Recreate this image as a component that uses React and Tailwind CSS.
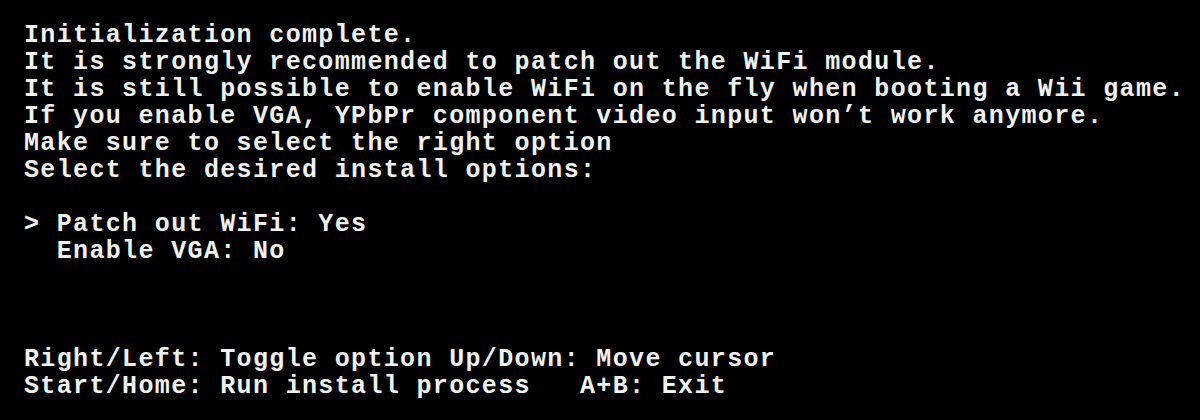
import React from "react";

const lines = [
  "Initialization complete.",
  "It is strongly recommended to patch out the WiFi module.",
  "It is still possible to enable WiFi on the fly when booting a Wii game.",
  "If you enable VGA, YPbPr component video input won\u2019t work anymore.",
  "Make sure to select the right option",
  "Select the desired install options:",
  "",
  "> Patch out WiFi: Yes",
  "  Enable VGA: No",
  "",
  "",
  "",
  "Right/Left: Toggle option Up/Down: Move cursor",
  "Start/Home: Run install process   A+B: Exit",
];

function App() {
  return (
    <div className="w-[1200px] h-[420px] bg-black overflow-hidden pt-[22px] pl-[24px]">
      <div className="font-['Liberation_Mono',monospace] font-bold text-[25px] leading-[27px] tracking-[1.35px] text-[#f2f2f2] whitespace-pre">
        {lines.map((line, i) => (
          <div key={i} className="h-[27px]">
            {line}
          </div>
        ))}
      </div>
    </div>
  );
}

export default App;
